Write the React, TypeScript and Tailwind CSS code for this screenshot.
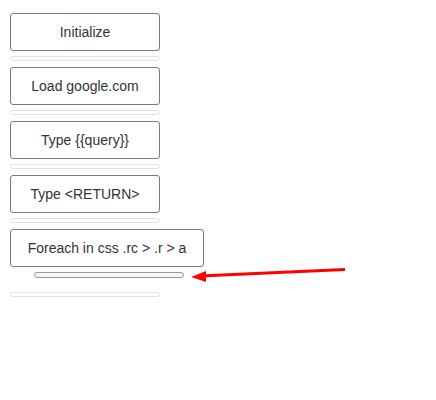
const steps = ["Initialize", "Load google.com", "Type {{query}}", "Type <RETURN>"];

const Step = ({ label, wide }: { label: string; wide?: boolean }) => (
  <div
    className={`h-[38px] ${wide ? "w-[194px]" : "w-[150px]"} flex items-center justify-center rounded-[3px] border border-[#7a7a7a] bg-white text-[14px] text-[#333]`}
  >
    {label}
  </div>
);

const Slot = () => <div className="mt-[5px] mb-[6px] h-[5px] w-[150px] rounded-full border border-[#e2e2e2]" />;

export default function App() {
  return (
    <div className="relative h-[400px] w-[436px] bg-white pl-[10px] pt-[13px]" style={{ fontFamily: '"Liberation Sans", Arial, sans-serif' }}>
      {steps.map((s) => (
        <div key={s}>
          <Step label={s} />
          <Slot />
        </div>
      ))}
      <Step label="Foreach in css .rc > .r > a" wide />
      {/* drop target for nested step */}
      <div className="mt-[5px] ml-[24px] h-[6px] w-[150px] rounded-full border border-[#9a9a9a] bg-[#f7f7f7]" />
      <div className="mt-[14px] h-[5px] w-[150px] rounded-full border border-[#e2e2e2]" />

      <svg className="absolute left-0 top-0" width="436" height="400">
        <line x1="345" y1="269.5" x2="200" y2="276" stroke="#f00" strokeWidth="3" />
        <polygon points="191,277 206,271 206,282" fill="#f00" />
      </svg>
    </div>
  );
}
